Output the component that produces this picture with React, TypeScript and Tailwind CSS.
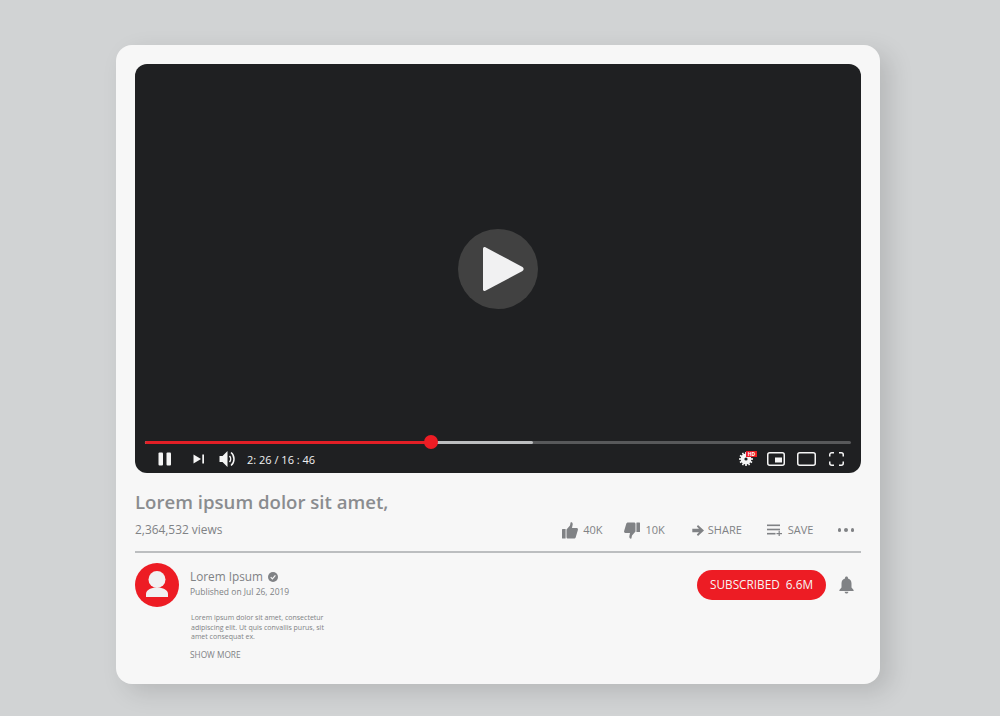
import React from "react"

const font = "font-['Open_Sans',sans-serif]"

const PauseIcon = () => (
  <svg width="14" height="14" viewBox="0 0 14 14" fill="#f5f5f5">
    <rect x="0.5" y="0.5" width="4.5" height="13" rx="1" />
    <rect x="8.5" y="0.5" width="4.5" height="13" rx="1" />
  </svg>
)

const NextIcon = () => (
  <svg width="12" height="10" viewBox="0 0 12 10" fill="#f5f5f5">
    <path d="M0.5 0.5 L8 5 L0.5 9.5 Z" />
    <rect x="9.3" y="0.5" width="1.7" height="9" />
  </svg>
)

const VolumeIcon = () => (
  <svg width="18" height="18" viewBox="0 0 18 18" fill="none">
    <path d="M0.5 6 H3.5 L8.5 1 V17 L3.5 12 H0.5 Z" fill="#f5f5f5" />
    <path d="M10.5 6 C12 7.6 12 10.4 10.5 12" stroke="#f5f5f5" strokeWidth="1.5" />
    <path d="M12 2.5 C16 5.5 16 12.5 12 15.5" stroke="#f5f5f5" strokeWidth="1.5" />
  </svg>
)

const GearIcon = () => (
  <svg width="14" height="14" viewBox="0 0 14 14" fill="#f5f5f5">
    <circle cx="7" cy="7" r="5.4" />
    <circle cx="7" cy="7" r="1.6" fill="#1f2023" />
    {[0, 30, 60, 90, 120, 150, 180, 210, 240, 270, 300, 330].map((a) => (
      <rect key={a} x="6.2" y="0" width="1.6" height="3" transform={`rotate(${a} 7 7)`} />
    ))}
  </svg>
)

const MiniPlayerIcon = () => (
  <svg width="18" height="14" viewBox="0 0 18 14" fill="none">
    <rect x="0.75" y="0.75" width="16.5" height="12.5" rx="2" stroke="#f5f5f5" strokeWidth="1.5" />
    <rect x="8" y="5.5" width="7" height="5" fill="#f5f5f5" />
  </svg>
)

const TheaterIcon = () => (
  <svg width="19" height="14" viewBox="0 0 19 14" fill="none">
    <rect x="0.75" y="0.75" width="17.5" height="12.5" rx="2" stroke="#f5f5f5" strokeWidth="1.5" />
  </svg>
)

const FullscreenIcon = () => (
  <svg width="15" height="14" viewBox="0 0 15 14" fill="none" stroke="#f5f5f5" strokeWidth="1.5">
    <path d="M0.75 4.5 V2.75 A2 2 0 0 1 2.75 0.75 H5" />
    <path d="M10 0.75 H12.25 A2 2 0 0 1 14.25 2.75 V4.5" />
    <path d="M14.25 9.5 V11.25 A2 2 0 0 1 12.25 13.25 H10" />
    <path d="M5 13.25 H2.75 A2 2 0 0 1 0.75 11.25 V9.5" />
  </svg>
)

const ThumbUp = () => (
  <svg width="16" height="17" viewBox="0 0 16 17" fill="#808285">
    <rect x="0" y="7" width="3.6" height="9.5" rx="0.5" />
    <path d="M4.5 7.5 L8 3.5 L8.6 0.5 C10 0 11 1 10.6 3 L10 6 H14.6 C15.8 6 16.2 7.2 15.8 8.2 L13.8 15 C13.5 16 12.9 16.5 12 16.5 H6 C5.2 16.5 4.5 16 4.5 15 Z" />
  </svg>
)

const ThumbDown = () => (
  <svg width="16" height="17" viewBox="0 0 16 17" fill="#808285" className="rotate-180">
    <rect x="0" y="7" width="3.6" height="9.5" rx="0.5" />
    <path d="M4.5 7.5 L8 3.5 L8.6 0.5 C10 0 11 1 10.6 3 L10 6 H14.6 C15.8 6 16.2 7.2 15.8 8.2 L13.8 15 C13.5 16 12.9 16.5 12 16.5 H6 C5.2 16.5 4.5 16 4.5 15 Z" />
  </svg>
)

const ShareArrow = () => (
  <svg width="12" height="11" viewBox="0 0 12 11" fill="#808285">
    <path d="M6 0 L12 5.5 L6 11 L4.8 9.6 L7 7.2 H0.3 V3.8 H7 L4.8 1.4 Z" />
  </svg>
)

const SaveIcon = () => (
  <svg width="15" height="12" viewBox="0 0 15 12" fill="#808285">
    <rect x="0" y="0.5" width="13" height="1.6" />
    <rect x="0" y="4.7" width="13" height="1.6" />
    <rect x="0" y="8.9" width="8.5" height="1.6" />
    <rect x="9.5" y="9" width="5.5" height="1.2" />
    <rect x="11.6" y="6.8" width="1.2" height="5.2" />
  </svg>
)

const BellIcon = () => (
  <svg width="15" height="18" viewBox="0 0 15 18" fill="#808285">
    <path d="M7.5 0.5 C8.4 0.5 9 1.1 9 2 V2.6 C11.3 3.3 12.5 5.2 12.5 7.5 V11.5 L14.6 14 V15 H0.4 V14 L2.5 11.5 V7.5 C2.5 5.2 3.7 3.3 6 2.6 V2 C6 1.1 6.6 0.5 7.5 0.5 Z" />
    <path d="M5.6 15.8 H9.4 C9.3 17 8.5 17.6 7.5 17.6 C6.5 17.6 5.7 17 5.6 15.8 Z" />
  </svg>
)

const VerifiedIcon = () => (
  <svg width="10" height="10" viewBox="0 0 10 10">
    <circle cx="5" cy="5" r="5" fill="#808285" />
    <path d="M2.7 5.1 L4.4 6.8 L7.4 3.4" fill="none" stroke="#f7f7f7" strokeWidth="1.2" />
  </svg>
)

const Avatar = () => (
  <div className="w-[44px] h-[44px] rounded-full bg-[#ed1c24] shrink-0">
    <svg width="44" height="44" viewBox="0 0 44 44" fill="#f1f1f2">
      <circle cx="22" cy="16.5" r="8.5" />
      <path d="M11 34 V31 C11 27 16 24.5 22 24.5 C28 24.5 33 27 33 31 V34 Z" />
    </svg>
  </div>
)

export default function App() {
  return (
    <div className={`w-[1000px] h-[716px] bg-[#d1d3d4] pt-[45px] pl-[116px] overflow-hidden ${font}`}>
      <div className="w-[764px] h-[639px] rounded-[16px] bg-[#f7f7f7] px-[19px] pt-[19px] shadow-[10px_8px_24px_rgba(0,0,0,0.13)]">
        {/* player */}
        <div className="relative w-[726px] h-[409px] rounded-[12px] bg-[#1f2022] flex flex-col justify-end px-[10px] pb-[4px]">
          <div className="absolute left-[323px] top-[165px] w-[80px] h-[80px] rounded-full bg-[#414141] flex items-center justify-center">
            <svg width="41" height="46" viewBox="0 0 42 46" fill="#f1f1f2" className="ml-[11px]">
              <path d="M2 0.5 L40.5 21 C42 22 42 24 40.5 25 L2 45.5 C1 46 0 45 0 44 V2 C0 1 1 0 2 0.5 Z" />
            </svg>
          </div>

          {/* progress */}
          <div className="relative h-[3px] rounded-full bg-[#58595b] mb-[6px]">
            <div className="absolute left-0 top-0 h-[3px] w-[388px] rounded-full bg-[#bcbec0]" />
            <div className="absolute left-0 top-0 h-[3px] w-[286px] rounded-full bg-[#e21f26]" />
            <div className="absolute left-[279px] top-[-6px] w-[14px] h-[14px] rounded-full bg-[#ed1c24]" />
          </div>

          {/* controls */}
          <div className="flex items-center h-[18px] mb-[1px] text-[#f1f1f2]">
            <div className="ml-[13px]"><PauseIcon /></div>
            <div className="ml-[21px]"><NextIcon /></div>
            <div className="ml-[14px]"><VolumeIcon /></div>
            <span className="ml-[10px] text-[11px] font-medium leading-none">2: 26 / 16 : 46</span>
            <div className="ml-auto flex items-center">
              <div className="relative">
                <GearIcon />
                <span className="absolute left-[7px] top-[-1px] w-[11px] h-[6px] bg-[#ed1c24] text-white text-[5px] font-bold leading-[6px] text-center">HD</span>
              </div>
              <div className="ml-[14px]"><MiniPlayerIcon /></div>
              <div className="ml-[12px]"><TheaterIcon /></div>
              <div className="ml-[13px] mr-[7px]"><FullscreenIcon /></div>
            </div>
          </div>
        </div>

        {/* title */}
        <h1 className="mt-[16px] text-[18.6px] leading-[26px] font-semibold text-[#8a8c8f]">Lorem ipsum dolor sit amet,</h1>
        <div className="flex items-center h-[26px] mt-[2px] text-[#808285]">
          <span className="text-[11.9px] font-medium">2,364,532 views</span>
          <div className="ml-auto flex items-center text-[11px] font-medium">
            <ThumbUp />
            <span className="ml-[5px]">40K</span>
            <div className="ml-[21px]"><ThumbDown /></div>
            <span className="ml-[6px]">10K</span>
            <div className="ml-[27px]"><ShareArrow /></div>
            <span className="ml-[4px]">SHARE</span>
            <div className="ml-[25px]"><SaveIcon /></div>
            <span className="ml-[6px]">SAVE</span>
            <div className="ml-[24px] mr-[7px] flex gap-[3px]">
              <span className="w-[3.5px] h-[3.5px] rounded-full bg-[#808285]" />
              <span className="w-[3.5px] h-[3.5px] rounded-full bg-[#808285]" />
              <span className="w-[3.5px] h-[3.5px] rounded-full bg-[#808285]" />
            </div>
          </div>
        </div>
        <div className="mt-[8px] h-[2px] bg-[#bcbec0]" />

        {/* channel */}
        <div className="mt-[10px] flex items-start">
          <Avatar />
          <div className="ml-[11px] text-[#808285]">
            <div className="flex items-center h-[16px] mt-[6px]">
              <span className="text-[11.8px] font-medium">Lorem Ipsum</span>
              <div className="ml-[5px]"><VerifiedIcon /></div>
            </div>
            <div className="text-[8.5px] font-medium leading-[12px] mt-[1px]">Published on Jul 26, 2019</div>
            <p className="ml-[1px] mt-[15px] w-[140px] text-[7px] leading-[9.6px] text-[#808285]">
              Lorem ipsum dolor sit amet, consectetur adipiscing elit. Ut quis convallis purus, sit amet consequat ex.
            </p>
            <div className="mt-[8px] text-[8.3px] font-medium leading-[10px]">SHOW MORE</div>
          </div>
          <div className="ml-auto flex items-center mt-[7px]">
            <div className="h-[30px] w-[129px] rounded-full bg-[#ed1c24] text-[#f6f6f6] text-[11.8px] font-medium flex items-center justify-center gap-[6px]">
              <span>SUBSCRIBED</span>
              <span>6.6M</span>
            </div>
            <div className="ml-[13px] mr-[7px]"><BellIcon /></div>
          </div>
        </div>
      </div>
    </div>
  )
}
